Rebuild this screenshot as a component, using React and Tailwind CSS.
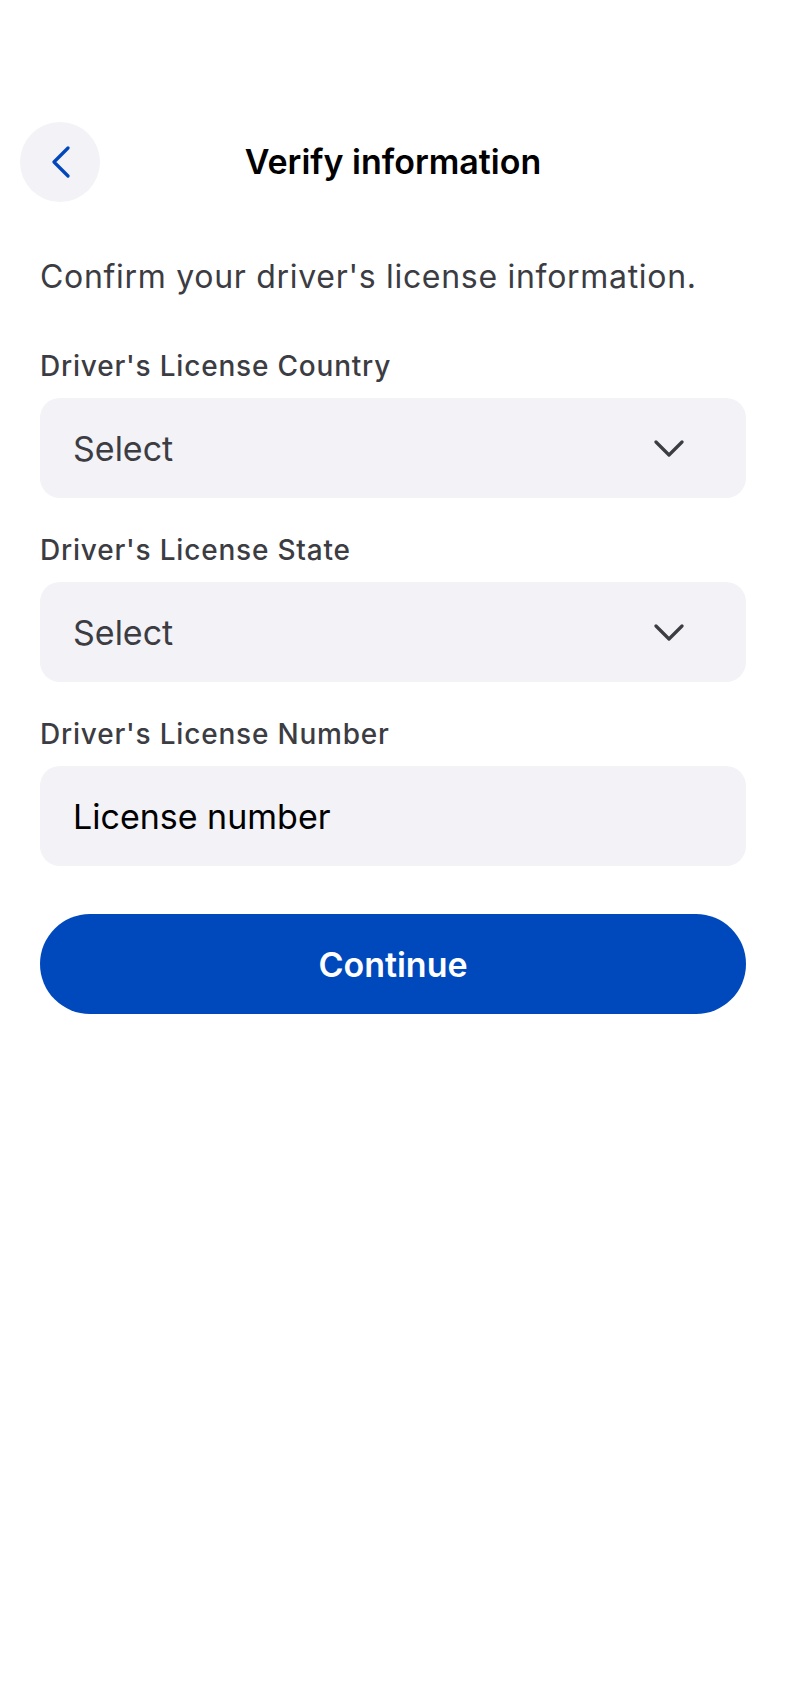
import { useState } from 'react';

const font = { fontFamily: 'Inter, "Noto Sans", sans-serif' };

function ChevronDown() {
    return (
        <svg width="30" height="17" viewBox="0 0 30 17" fill="none" stroke="#3c3c43" strokeWidth="3.2" strokeLinecap="round" strokeLinejoin="round">
            <polyline points="2,2 15,15 28,2" />
        </svg>
    );
}

function SelectField({ label, value }) {
    return (
        <div>
            <div className="text-[28px] leading-[34px] font-medium tracking-[0.8px] text-[#3c3c43]">{label}</div>
            <button className="mt-[15px] w-full h-[100px] rounded-[20px] bg-[#f2f2f7] flex items-center justify-between pl-[33px] pr-[62px]">
                <span className="text-[34px] text-[#3c3c43]">{value}</span>
                <ChevronDown />
            </button>
        </div>
    );
}

export default function App() {
    const [licenseNumber, setLicenseNumber] = useState('');

    return (
        <div className="min-h-screen bg-white pt-[122px]" style={font}>
            {/* header */}
            <div className="px-5 grid grid-cols-[80px_1fr_80px] items-center">
                <button className="w-20 h-20 rounded-full bg-[#f2f2f7] flex items-center justify-center">
                    <svg width="22" height="32" viewBox="0 0 22 32" fill="none" stroke="#0047bb" strokeWidth="3.2" strokeLinecap="round" strokeLinejoin="round">
                        <polyline points="19,2 5,16 19,30" />
                    </svg>
                </button>
                <h1 className="text-center text-[34px] leading-10 font-semibold text-black">Verify information</h1>
                <div />
            </div>

            <main className="px-10">
                <p className="mt-[55px] text-[32px] leading-10 tracking-[0.7px] text-[#3c3c43]">
                    Confirm your driver's license information.
                </p>

                <div className="mt-[52px] flex flex-col gap-[35px]">
                    <SelectField label="Driver's License Country" value="Select" />
                    <SelectField label="Driver's License State" value="Select" />
                    <div>
                        <div className="text-[28px] leading-[34px] font-medium tracking-[0.8px] text-[#3c3c43]">Driver's License Number</div>
                        <input
                            value={licenseNumber}
                            onChange={e => setLicenseNumber(e.target.value)}
                            placeholder="License number"
                            className="mt-[15px] w-full h-[100px] rounded-[20px] bg-[#f2f2f7] px-[33px] text-[34px] text-black placeholder:text-black outline-none"
                        />
                    </div>
                </div>

                <button className="mt-[48px] w-full h-[100px] rounded-full bg-[#0049bd] text-white text-[34px] font-semibold">
                    Continue
                </button>
            </main>
        </div>
    );
}
